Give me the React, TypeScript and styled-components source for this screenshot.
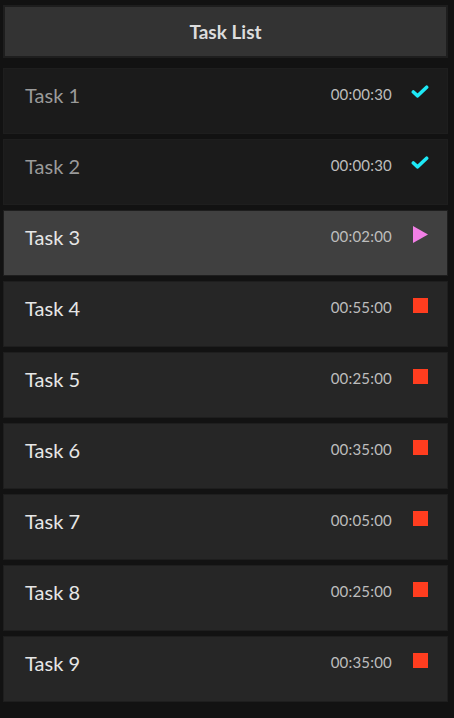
import { createGlobalStyle } from 'styled-components';
import styled from 'styled-components';

type Status = 'done' | 'running' | 'stopped';

interface ITask {
  id: number;
  title: string;
  time: string;
  status: Status;
}

const tasks: ITask[] = [
  { id: 1, title: 'Task 1', time: '00:00:30', status: 'done' },
  { id: 2, title: 'Task 2', time: '00:00:30', status: 'done' },
  { id: 3, title: 'Task 3', time: '00:02:00', status: 'running' },
  { id: 4, title: 'Task 4', time: '00:55:00', status: 'stopped' },
  { id: 5, title: 'Task 5', time: '00:25:00', status: 'stopped' },
  { id: 6, title: 'Task 6', time: '00:35:00', status: 'stopped' },
  { id: 7, title: 'Task 7', time: '00:05:00', status: 'stopped' },
  { id: 8, title: 'Task 8', time: '00:25:00', status: 'stopped' },
  { id: 9, title: 'Task 9', time: '00:35:00', status: 'stopped' },
];

const GlobalStyle = createGlobalStyle`
  html, body {
    margin: 0;
    background: #121212;
    font-family: Lato, "Open Sans", sans-serif;
  }
`;

const Page = styled.div`
  display: flex;
  flex-direction: column;
  gap: 5px;
  padding: 5px 6px 0 3px;
  min-height: 718px;
  box-sizing: border-box;
`;

const Header = styled.div`
  height: 53px;
  box-sizing: border-box;
  border: 2px solid #1e1e1e;
  background: #333333;
  color: #dcdcdc;
  font-weight: 700;
  font-size: 19px;
  display: flex;
  align-items: center;
  justify-content: center;
  margin-bottom: 5px;
`;

const Row = styled.div<{ $status: Status }>`
  height: 66px;
  box-sizing: border-box;
  border: 1px solid #1e1e1e;
  background: ${p => p.$status === 'done' ? '#1b1b1b' : p.$status === 'running' ? '#404040' : '#262626'};
  display: flex;
  align-items: flex-start;
  padding: 14px 18px 0 21px;
`;

const Title = styled.div<{ $done: boolean }>`
  flex: 1;
  font-size: 20px;
  color: ${p => p.$done ? '#9a9a9a' : '#e6e6e6'};
  line-height: 24px;
`;

const Time = styled.div`
  font-size: 15px;
  color: #bdbdbd;
  line-height: 18px;
  margin-top: 2px;
  margin-right: 19px;
  letter-spacing: 0.2px;
`;

const IconBox = styled.div`
  width: 18px;
  height: 18px;
  display: flex;
  align-items: center;
  justify-content: center;
`;

const Square = styled.div`
  width: 15px;
  height: 15px;
  background: #ff3d1f;
`;

const StatusIcon = ({ status }: { status: Status }) => {
  if (status === 'done') {
    return (
      <svg width="19" height="16" viewBox="0 0 19 16">
        <path d="M2.5 8 L7 12 L16.5 3" fill="none" stroke="#1de9f6" strokeWidth="3.8" strokeLinecap="round" strokeLinejoin="round" />
      </svg>
    );
  }
  if (status === 'running') {
    return (
      <svg width="16" height="17" viewBox="0 0 16 17">
        <path d="M1 0 L16 8.5 L1 17 Z" fill="#f27fe6" />
      </svg>
    );
  }
  return <Square />;
};

const App = () => {
  return (
    <>
      <GlobalStyle />
      <Page>
        <Header>Task List</Header>
        {tasks.map(task => (
          <Row key={task.id} $status={task.status}>
            <Title $done={task.status === 'done'}>{task.title}</Title>
            <Time>{task.time}</Time>
            <IconBox>
              <StatusIcon status={task.status} />
            </IconBox>
          </Row>
        ))}
      </Page>
    </>
  );
};

export default App;
